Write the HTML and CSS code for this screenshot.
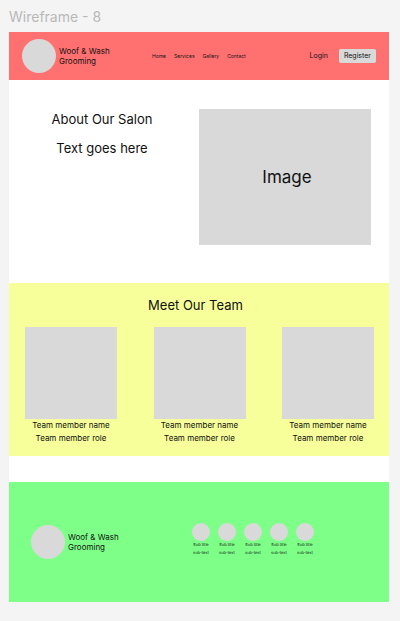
FILE: index.html
```html
<!DOCTYPE html>
<html lang="en">
<head>
<meta charset="utf-8">
<meta name="viewport" content="width=device-width, initial-scale=1">
<title>Woof &amp; Wash Grooming</title>
<link rel="stylesheet" href="styles.css">
</head>
<body>
<p class="frame-label">Wireframe - 8</p>
<div class="frame">
  <header class="header">
    <div class="brand">
      <span class="logo"></span>
      <span class="brand-name">Woof &amp; Wash<br>Grooming</span>
    </div>
    <nav class="nav">
      <a href="#">Home</a>
      <a href="#">Services</a>
      <a href="#">Gallery</a>
      <a href="#">Contact</a>
    </nav>
    <div class="account">
      <a class="login" href="#">Login</a>
      <button class="register" type="button">Register</button>
    </div>
  </header>
  <main>
    <section class="about">
      <div class="about-text">
        <h1 class="title">About Our Salon</h1>
        <p class="title">Text goes here</p>
      </div>
      <div class="image">Image</div>
    </section>
    <section class="team">
      <h2 class="title team-title">Meet Our Team</h2>
      <div class="members">
        <div class="member"><div class="photo"></div><p>Team member name</p><p>Team member role</p></div>
        <div class="member"><div class="photo"></div><p>Team member name</p><p>Team member role</p></div>
        <div class="member"><div class="photo"></div><p>Team member name</p><p>Team member role</p></div>
      </div>
    </section>
  </main>
  <footer class="footer">
    <div class="brand">
      <span class="logo"></span>
      <span class="brand-name">Woof &amp; Wash<br>Grooming</span>
    </div>
    <ul class="links">
      <li><span class="dot"></span><span>Sub title</span><span>sub-text</span></li>
      <li><span class="dot"></span><span>Sub title</span><span>sub-text</span></li>
      <li><span class="dot"></span><span>Sub title</span><span>sub-text</span></li>
      <li><span class="dot"></span><span>Sub title</span><span>sub-text</span></li>
      <li><span class="dot"></span><span>Sub title</span><span>sub-text</span></li>
    </ul>
  </footer>
</div>
</body>
</html>
```
FILE: styles.css
```css
* {
  box-sizing: border-box;
}

body {
  margin: 0;
  padding: 8px 11px 19px 9px;
  background: #f4f4f4;
  color: #111;
  font-family: Inter, "Liberation Sans", sans-serif;
}

h1, h2, p, ul {
  margin: 0;
  padding: 0;
}

a {
  color: inherit;
  text-decoration: none;
}

.frame-label {
  margin-bottom: 6px;
  color: #b8b8b8;
  font-size: 14px;
  line-height: 18px;
}

.frame {
  background: #fff;
}

.header {
  display: grid;
  grid-template-columns: 130px 1fr auto;
  align-items: center;
  padding: 7px 13px;
  background: #ff7171;
}

.brand {
  display: flex;
  align-items: center;
  gap: 3px;
}

.logo {
  width: 34px;
  height: 34px;
  border-radius: 50%;
  background: #d9d9d9;
}

.brand-name {
  font-size: 8px;
  line-height: 10px;
}

.nav {
  display: flex;
  gap: 8px;
  font-size: 5px;
  line-height: 8px;
}

.account {
  display: flex;
  align-items: center;
  gap: 11px;
  font-size: 7px;
  line-height: 10px;
}

.register {
  padding: 2px 5px;
  border: 0;
  border-radius: 2px;
  background: #d9d9d9;
  color: inherit;
  font: inherit;
}

.title {
  font-size: 13px;
  font-weight: 400;
  line-height: 20px;
  text-align: center;
}

.about {
  display: grid;
  grid-template-columns: 1fr 172px;
  gap: 4px;
  padding: 29px 18px 38px 0;
}

.about-text {
  display: grid;
  align-content: start;
  gap: 9px;
}

.image {
  display: grid;
  place-items: center;
  height: 136px;
  padding-left: 4px;
  background: #d9d9d9;
  font-size: 17px;
}

.team {
  padding: 12px 15px 11px 16px;
  background: #f7ff9b;
}

.team-title {
  padding-right: 8px;
}

.members {
  display: flex;
  justify-content: space-between;
  margin-top: 12px;
  font-size: 8px;
  line-height: 13px;
  text-align: center;
}

.member {
  width: 92px;
}

.photo {
  aspect-ratio: 1;
  background: #d9d9d9;
}

.footer {
  display: grid;
  grid-template-columns: 161px 1fr;
  align-items: center;
  margin-top: 26px;
  padding: 41px 22px;
  background: #7dff88;
}

.links {
  display: flex;
  gap: 8px;
  padding-bottom: 4px;
  list-style: none;
  font-size: 4px;
  line-height: 8px;
  text-rendering: geometricPrecision;
}

.links li {
  display: flex;
  flex-direction: column;
  align-items: center;
  width: 18px;
  white-space: nowrap;
}

.dot {
  width: 18px;
  height: 18px;
  border-radius: 50%;
  background: #d9d9d9;
}
```
